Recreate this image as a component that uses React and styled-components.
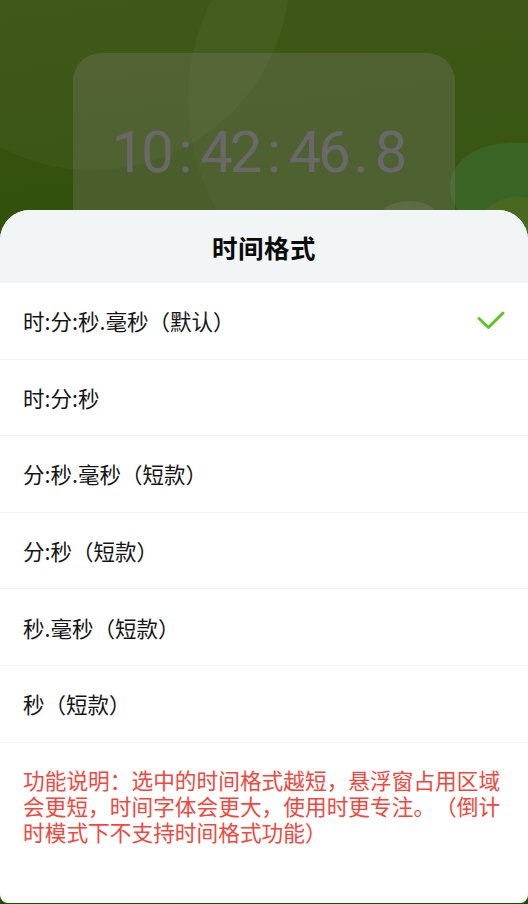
import React from "react";
import styled, { createGlobalStyle } from "styled-components";

const Global = createGlobalStyle`
  html, body { margin: 0; padding: 0; background: #1c4a02; }
  body { font-family: "Noto Sans CJK SC", "Noto Sans", sans-serif; }
  * { box-sizing: border-box; }
`;

const Screen = styled.div`
  position: relative;
  width: 528px;
  height: 904px;
  overflow: hidden;
  background: linear-gradient(172deg, #3a5210 0%, #2e5009 40%, #1a4b00 100%);
`;

const Blob = styled.div`
  position: absolute;
  border-radius: 50%;
  background: ${(p) => p.$color};
  pointer-events: none;
`;

const Backdrop = styled.div`
  position: relative;
  padding: 53px 0 0 73px;
`;

const ClockCard = styled.div`
  width: 382px;
  height: 240px;
  border-radius: 28px;
  background: rgba(140, 130, 135, 0.26);
  padding-top: 70px;
  display: flex;
  justify-content: center;
`;

const ClockText = styled.div`
  display: flex;
  font-family: Roboto, "Liberation Sans", sans-serif;
  font-size: 58px;
  line-height: 58px;
  color: #6a6868;
  margin-left: -12px;
`;

const ClockChar = styled.span`
  display: inline-block;
  width: ${(p) => (p.$narrow ? 27 : 29.5)}px;
  text-align: center;
`;

const Sheet = styled.div`
  position: absolute;
  top: 210px;
  left: 0;
  right: 0;
  bottom: 1px;
  background: #ffffff;
  border-radius: 30px 30px 8px 8px;
  overflow: hidden;
  display: flex;
  flex-direction: column;
`;

const SheetHeader = styled.div`
  height: 73px;
  background: #f2f5f6;
  display: flex;
  align-items: center;
  justify-content: center;
  font-size: 25.5px;
  font-weight: 700;
  color: #0b0b0b;
  letter-spacing: 0.5px;
`;

const OptionList = styled.div`
  display: flex;
  flex-direction: column;
`;

const Option = styled.div`
  height: 76.6px;
  display: flex;
  align-items: center;
  justify-content: space-between;
  padding: 0 22px 0 23px;
  border-bottom: 1px solid #f1f3f3;
  font-size: 21.5px;
  color: #141414;
  text-spacing-trim: space-all;
`;

const Note = styled.p`
  margin: 0;
  padding: 24px 23px 0 23px;
  font-size: 21.7px;
  line-height: 26px;
  color: #f3463d;
  text-spacing-trim: space-all;
`;

const Check = () => (
  <svg width="30" height="22" viewBox="0 0 30 22" aria-hidden="true">
    <polyline
      points="3,8.5 12.5,17.5 27,3"
      fill="none"
      stroke="#5cc623"
      strokeWidth="3"
      strokeLinecap="round"
      strokeLinejoin="round"
    />
  </svg>
);

const options = [
  "时:分:秒.毫秒（默认）",
  "时:分:秒",
  "分:秒.毫秒（短款）",
  "分:秒（短款）",
  "秒.毫秒（短款）",
  "秒（短款）",
];

const clock = "10:42:46.8".split("");

export default function App() {
  return (
    <>
      <Global />
      <Screen>
        <Blob $color="rgba(255,255,255,0.035)" style={{ left: -105, top: -225, width: 395, height: 395 }} />
        <Blob $color="rgba(255,255,255,0.03)" style={{ left: 188, top: -120, width: 430, height: 440 }} />
        <Blob $color="rgba(60,120,60,0.45)" style={{ left: 450, top: 143, width: 140, height: 100, borderRadius: "45% 50% 40% 60%" }} />
        <Blob $color="rgba(90,110,30,0.55)" style={{ left: 482, top: 197, width: 70, height: 50 }} />
        <Blob $color="rgba(130,140,130,0.28)" style={{ left: 378, top: 201, width: 62, height: 40 }} />
        <Backdrop>
          <ClockCard>
            <ClockText>
              {clock.map((c, i) => (
                <ClockChar key={i} $narrow={c === "."}>{c}</ClockChar>
              ))}
            </ClockText>
          </ClockCard>
        </Backdrop>
        <Sheet>
          <SheetHeader>时间格式</SheetHeader>
          <OptionList>
            {options.map((o, i) => (
              <Option key={o}>
                <span>{o}</span>
                {i === 0 && <Check />}
              </Option>
            ))}
          </OptionList>
          <Note>
            功能说明：选中的时间格式越短，悬浮窗占用区域会更短，时间字体会更大，使用时更专注。（倒计时模式下不支持时间格式功能）
          </Note>
        </Sheet>
      </Screen>
    </>
  );
}
